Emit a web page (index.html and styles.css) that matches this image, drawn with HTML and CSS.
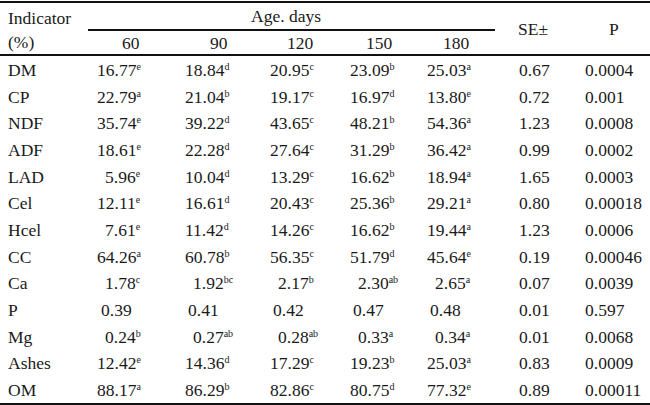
FILE: index.html
```html
<!DOCTYPE html>
<html>
<head>
<meta charset="utf-8">
<link rel="stylesheet" href="styles.css">
</head>
<body>
<table class="tbl">
  <colgroup>
    <col class="c0"><col class="c1"><col class="c2"><col class="c3"><col class="c4"><col class="c5"><col class="c6"><col class="c7">
  </colgroup>
  <thead>
    <tr class="h1">
      <th rowspan="2" class="ind">Indicator<br>(%)</th>
      <th colspan="5" class="age">Age. days</th>
      <th rowspan="2" class="se">SE±</th>
      <th rowspan="2" class="p">P</th>
    </tr>
    <tr class="h2">
      <th class="d1">60</th>
      <th class="d2">90</th>
      <th class="d3">120</th>
      <th class="d4">150</th>
      <th class="d5">180</th>
    </tr>
  </thead>
  <tbody>
    <tr><td>DM</td><td>16.77<sup>e</sup></td><td>18.84<sup>d</sup></td><td>20.95<sup>c</sup></td><td>23.09<sup>b</sup></td><td>25.03<sup>a</sup></td><td>0.67</td><td>0.0004</td></tr>
    <tr><td>CP</td><td>22.79<sup>a</sup></td><td>21.04<sup>b</sup></td><td>19.17<sup>c</sup></td><td>16.97<sup>d</sup></td><td>13.80<sup>e</sup></td><td>0.72</td><td>0.001</td></tr>
    <tr><td>NDF</td><td>35.74<sup>e</sup></td><td>39.22<sup>d</sup></td><td>43.65<sup>c</sup></td><td>48.21<sup>b</sup></td><td>54.36<sup>a</sup></td><td>1.23</td><td>0.0008</td></tr>
    <tr><td>ADF</td><td>18.61<sup>e</sup></td><td>22.28<sup>d</sup></td><td>27.64<sup>c</sup></td><td>31.29<sup>b</sup></td><td>36.42<sup>a</sup></td><td>0.99</td><td>0.0002</td></tr>
    <tr><td>LAD</td><td class="i1">5.96<sup>e</sup></td><td>10.04<sup>d</sup></td><td>13.29<sup>c</sup></td><td>16.62<sup>b</sup></td><td>18.94<sup>a</sup></td><td>1.65</td><td>0.0003</td></tr>
    <tr><td>Cel</td><td>12.11<sup>e</sup></td><td>16.61<sup>d</sup></td><td>20.43<sup>c</sup></td><td>25.36<sup>b</sup></td><td>29.21<sup>a</sup></td><td>0.80</td><td>0.00018</td></tr>
    <tr><td>Hcel</td><td class="i1">7.61<sup>e</sup></td><td>11.42<sup>d</sup></td><td>14.26<sup>c</sup></td><td>16.62<sup>b</sup></td><td>19.44<sup>a</sup></td><td>1.23</td><td>0.0006</td></tr>
    <tr><td>CC</td><td>64.26<sup>a</sup></td><td>60.78<sup>b</sup></td><td>56.35<sup>c</sup></td><td>51.79<sup>d</sup></td><td>45.64<sup>e</sup></td><td>0.19</td><td>0.00046</td></tr>
    <tr><td>Ca</td><td class="i1">1.78<sup>c</sup></td><td class="i1">1.92<sup>bc</sup></td><td class="i1">2.17<sup>b</sup></td><td class="i1">2.30<sup>ab</sup></td><td class="i1">2.65<sup>a</sup></td><td>0.07</td><td>0.0039</td></tr>
    <tr><td>P</td><td class="i2">0.39</td><td class="i2">0.41</td><td class="i2">0.42</td><td class="i2">0.47</td><td class="i2">0.48</td><td>0.01</td><td>0.597</td></tr>
    <tr><td>Mg</td><td class="i1">0.24<sup>b</sup></td><td class="i1">0.27<sup>ab</sup></td><td class="i1">0.28<sup>ab</sup></td><td class="i1">0.33<sup>a</sup></td><td class="i1">0.34<sup>a</sup></td><td>0.01</td><td>0.0068</td></tr>
    <tr><td>Ashes</td><td>12.42<sup>e</sup></td><td>14.36<sup>d</sup></td><td>17.29<sup>c</sup></td><td>19.23<sup>b</sup></td><td>25.03<sup>a</sup></td><td>0.83</td><td>0.0009</td></tr>
    <tr><td>OM</td><td>88.17<sup>a</sup></td><td>86.29<sup>b</sup></td><td>82.86<sup>c</sup></td><td>80.75<sup>d</sup></td><td>77.32<sup>e</sup></td><td>0.89</td><td>0.00011</td></tr>
  </tbody>
</table>
</body>
</html>
```
FILE: styles.css
```css
html, body {
  margin: 0;
  padding: 0;
  background: #ffffff;
}
body {
  font-family: "Liberation Serif", "Times New Roman", serif;
  font-size: 17.5px;
  color: #1a1a1a;
}
.tbl {
  width: 650px;
  margin-top: 1px;
  border-collapse: separate;
  border-spacing: 0;
  table-layout: fixed;
}
.c0 { width: 88px; }
.c1 { width: 92px; }
.c2 { width: 85px; }
.c3 { width: 80px; }
.c4 { width: 75px; }
.c5 { width: 75px; }
.c6 { width: 80px; }
.c7 { width: 75px; }

th, td {
  padding: 0;
  font-weight: normal;
  text-align: left;
  white-space: nowrap;
}
.h1 th {
  border-top: 2px solid #111;
}
.ind {
  vertical-align: top;
  padding: 3px 0 0 8px;
  line-height: 24px;
  border-bottom: 2px solid #111;
}
.age {
  height: 26px;
  vertical-align: middle;
  padding-left: 163px;
  border-bottom: 2px solid #111;
  line-height: 20px;
}
.se, .p {
  vertical-align: middle;
  border-bottom: 2px solid #111;
  padding-top: 2px;
}
.se { padding-left: 23px; }
.p { padding-left: 34px; }
.h2 th {
  height: 23px;
  border-bottom: 2px solid #111;
  vertical-align: middle;
  line-height: 20px;
}
.d1 { padding-left: 34px; }
.d2 { padding-left: 30px; }
.d3 { padding-left: 22px; }
.d4 { padding-left: 21px; }
.d5 { padding-left: 23px; }

tbody td {
  height: 27px;
  line-height: 20px;
  vertical-align: middle;
}
tbody tr:nth-child(3n) td {
  height: 26px;
}
tbody tr:last-child td {
  border-bottom: 2px solid #111;
}
tbody td:nth-child(1) { padding-left: 8px; }
tbody td:nth-child(2) { padding-left: 9px; }
tbody td:nth-child(3) { padding-left: 5px; }
tbody td:nth-child(4) { padding-left: 5px; }
tbody td:nth-child(5) { padding-left: 5px; }
tbody td:nth-child(6) { padding-left: 7px; }
tbody td:nth-child(7) { padding-left: 24px; }
tbody td:nth-child(8) { padding-left: 10px; }

tbody td:nth-child(2).i1 { padding-left: 17px; }
tbody td:nth-child(2).i2 { padding-left: 13px; }
tbody td:nth-child(3).i1,
tbody td:nth-child(4).i1,
tbody td:nth-child(5).i1 { padding-left: 13px; }
tbody td:nth-child(6).i1 { padding-left: 15px; }
tbody td:nth-child(3).i2,
tbody td:nth-child(4).i2,
tbody td:nth-child(5).i2 { padding-left: 8px; }
tbody td:nth-child(6).i2 { padding-left: 10px; }

sup {
  font-size: 10px;
  vertical-align: 6px;
  line-height: 0;
}
```
